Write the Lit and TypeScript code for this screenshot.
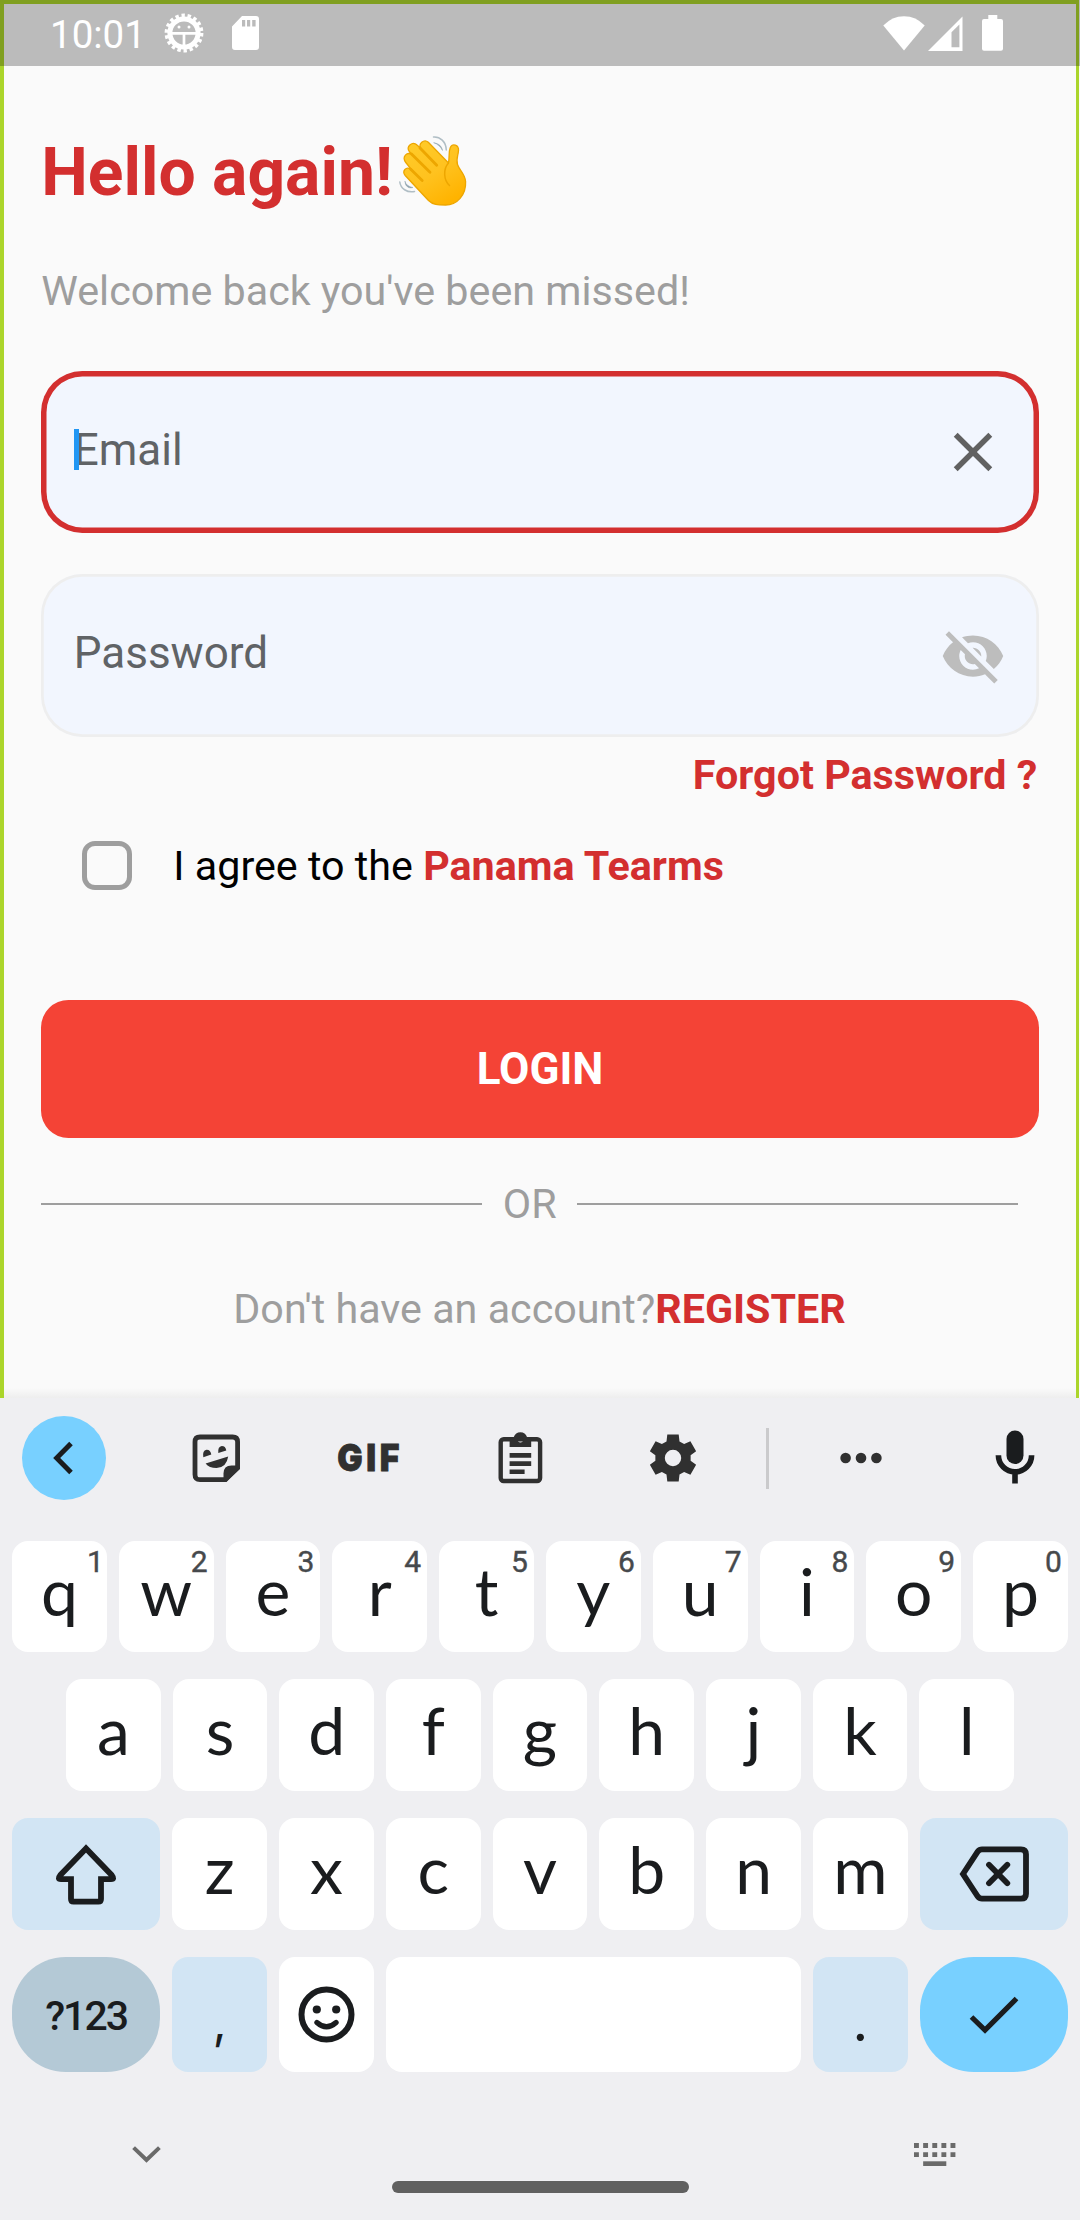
import { LitElement, html, css, nothing } from "lit";
import { customElement, property } from "lit/decorators.js";

const GEAR_POINTS = Array.from({ length: 6 }, (_, i) => {
  const a = (i * Math.PI) / 3;
  return [
    [-6.5, -16.6],
    [-5.7, -23.4],
    [5.7, -23.4],
    [6.5, -16.6],
  ]
    .map(([x, y]) => `${(x * Math.cos(a) - y * Math.sin(a)).toFixed(2)} ${(x * Math.sin(a) + y * Math.cos(a)).toFixed(2)}`)
    .join(" L");
}).join(" L");

const icons = {
  debug: html`<svg width="40" height="40" viewBox="-20 -20 40 40" fill="none" stroke="#fff">
    <circle r="14.1" stroke-width="5" />
    <circle r="17.6" stroke-width="3.6" stroke-dasharray="3.4 2.743" />
    <path d="M-12 .3H12M0 1V13" stroke-width="2.7" />
    <circle cx="-5" cy="-6" r="1.5" fill="#fff" stroke="none" />
    <circle cx="5" cy="-6" r="1.5" fill="#fff" stroke="none" />
  </svg>`,
  sd: html`<svg width="27" height="34" viewBox="0 0 27 34">
    <path fill="#fff" fill-rule="evenodd" d="M10 0H24Q27 0 27 3V31Q27 34 24 34H3Q0 34 0 31V10.500ZM10 4V10.600H13.200V4ZM15 4V10.600H18.200V4ZM20.200 4V10.600H23.600V4Z" />
  </svg>`,
  wifi: html`<svg width="42" height="35" viewBox="0 0 42 35"><path fill="#fff" d="M21 34.500L.3 9.500Q9 .2 21 .2T41.700 9.500Z" /></svg>`,
  signal: html`<svg width="35" height="35" viewBox="0 0 35 35"><path fill="#fff" fill-rule="evenodd" d="M34.500 .5V35H0ZM31.400 8.500L23.500 16.300V31.300H31.400Z" /></svg>`,
  battery: html`<svg width="21" height="36" viewBox="0 0 21 36"><path fill="#fff" d="M6.300 0H15.300V4H19Q21 4 21 6V33.700Q21 35.700 19 35.700H2Q0 35.700 0 33.700V6Q0 4 2 4H6.300Z" /></svg>`,
  wave: html`<svg width="68" height="70" viewBox="0 0 68 70" fill="none" stroke-linecap="round" stroke-linejoin="round" aria-label="waving hand">
    <defs>
      <linearGradient id="skin" x1="15" y1="10" x2="50" y2="66" gradientUnits="userSpaceOnUse">
        <stop offset="0" stop-color="#ffca28" /><stop offset=".5" stop-color="#ffc21f" /><stop offset="1" stop-color="#ffb300" />
      </linearGradient>
    </defs>
    <path fill="url(#skin)" stroke="#eda600" stroke-width="1.300"
      d="M29.500 64.500L6.200 39.500C2.500 35 7.500 30 11.300 33.300L14 35.500L6.800 26.500C2.500 20.500 8 15.500 13 18.500L10.500 15.800C6.500 10.500 13.500 4.500 18.300 9.300L22.300 13C18.500 8 25 2.500 29.300 6.200L49.500 27C50.600 21 49.400 16 51.300 11.500C53.300 7 60 8.500 59.500 14.500C59.200 19.500 56.800 23.500 58.500 28.500C60.500 34.500 66 37.500 66.600 45.500C67.300 59 58 69 46.500 69C39 69 34 69 29.500 64.500Z" />
    <path stroke="#eda600" stroke-width="2.800" d="M21 12L37.700 29.300M12.500 18L31 36.300M11.500 33L23.200 44.500" />
    <path stroke="#eda600" stroke-width="1.500" d="M49.500 27C44 33 44.500 44 50.500 49.500" />
    <path stroke="#b0bec5" stroke-width="1.500" d="M34.500 1C41 .5 47 5.500 47.300 14M.8 46C1.500 52.500 8 57 15.500 55.500" />
    <path fill="#90a4ae" d="M35 6.800C40 7.500 43 10.500 43.500 14.500C41.500 10.500 39 8.500 35 6.800ZM6 45.500C7 49 10 50.800 14 51.500C9.500 53 6 50 6 45.500Z" stroke="#90a4ae" stroke-width=".5" />
  </svg>`,
  clear: html`<svg width="66" height="66" viewBox="0 0 24 24"><path fill="#616161" d="M19 6.410L17.590 5 12 10.590 6.410 5 5 6.410 10.590 12 5 17.590 6.410 19 12 13.410 17.590 19 19 17.590 13.410 12z" /></svg>`,
  eyeOff: html`<svg class="eye" width="66" height="66" viewBox="0 0 24 24"><path fill="#bdbdbd" d="M12 7c2.760 0 5 2.240 5 5 0 .65-.13 1.260-.36 1.830l2.920 2.920c1.510-1.260 2.700-2.890 3.430-4.750-1.730-4.390-6-7.500-11-7.500-1.400 0-2.740.25-3.980.7l2.160 2.160C10.740 7.130 11.350 7 12 7zM2 4.270l2.280 2.280.46.46C3.080 8.300 1.780 10.020 1 12c1.730 4.390 6 7.500 11 7.500 1.550 0 3.030-.3 4.380-.84l.42.42L19.730 22 21 20.730 3.270 3 2 4.270zM7.530 9.800l1.550 1.550c-.05.21-.08.43-.08.65 0 1.660 1.340 3 3 3 .22 0 .44-.03.65-.08l1.550 1.550c-.67.33-1.410.53-2.200.53-2.760 0-5-2.240-5-5 0-.79.2-1.530.53-2.200zm4.310-.78l3.150 3.150.02-.16c0-1.660-1.340-3-3-3l-.17.010z" /></svg>`,
  back: html`<svg width="20" height="34" viewBox="0 0 20 34" fill="none" stroke="#1a1c1e" stroke-width="5"><path d="M18 2.500L3.700 17L18 31.500" /></svg>`,
  sticker: html`<svg width="48" height="48" viewBox="0 0 48 48" fill="#303030">
    <path fill="none" stroke="#303030" stroke-width="4.800" d="M33 45.600H8Q3 45.600 3 40.600V8Q3 3 8 3H40.600Q45.600 3 45.600 8V34Z" />
    <path d="M31.500 46V39.500Q31.500 31.500 39.500 31.500H47.500V35L34.500 48H31.500Z" />
    <path d="M11.300 23.200Q10.200 16.500 14.500 15.800Q18.500 15.600 19.300 20.500ZM26.300 18.900Q25.600 12.800 29.800 12Q33.500 12 34.300 16.400ZM13.600 29.500L36.200 22.600Q34.500 33.800 24.600 34Q17 34 13.600 29.500Z" />
  </svg>`,
  clipboard: html`<svg width="45" height="52" viewBox="0 0 45 52" fill="#303030">
    <rect x="2.700" y="7.200" width="39.400" height="41.800" rx="3" fill="none" stroke="#303030" stroke-width="4.400" />
    <path fill-rule="evenodd" d="M11.600 5H15.800A7 7 0 0 1 29 5H33.200V15H11.600ZM22.400 5A2.700 2.700 0 1 0 22.400 10.400A2.700 2.700 0 1 0 22.400 5Z" />
    <path d="M11.600 21H33.200V25.700H11.600ZM11.600 29.200H33.200V33.900H11.600ZM11.600 37.400H26.600V42.100H11.600Z" />
  </svg>`,
  settings: html`<svg width="48" height="48" viewBox="-24 -24 48 48">
    <path fill="#303030" fill-rule="evenodd" d="M${GEAR_POINTS}ZM-8.200 0A8.200 8.200 0 1 0 8.200 0A8.200 8.200 0 1 0 -8.200 0Z" />
  </svg>`,
  more: html`<svg width="42" height="12" viewBox="0 0 42 12" fill="#303030"><circle cx="5.600" cy="6" r="5.300" /><circle cx="21" cy="6" r="5.300" /><circle cx="36.400" cy="6" r="5.300" /></svg>`,
  mic: html`<svg width="40" height="54" viewBox="0 0 40 54">
    <rect x="11.500" y=".5" width="17" height="33.500" rx="8.500" fill="#1a1c1e" />
    <path d="M3.400 25.300A16.600 16.600 0 0 0 36.600 25.300M20 42V53.500" fill="none" stroke="#1a1c1e" stroke-width="5.600" />
  </svg>`,
  shift: html`<svg width="62" height="62" viewBox="0 0 62 62" fill="none" stroke="#1a1c1e" stroke-width="5.800">
    <path d="M31 5.500L5.200 32.300Q2 36.200 6 36.200H16V56Q16 58.600 18.600 58.600H43.400Q46 58.600 46 56V36.200H56Q60 36.200 56.800 32.300Z" />
  </svg>`,
  backspace: html`<svg width="72" height="56" viewBox="0 0 72 56" fill="none" stroke="#1a1c1e" stroke-width="5.800">
    <path d="M5 28L19.800 5.500Q21.500 3.300 24 3.300H63Q68 3.300 68 8.300V47.700Q68 52.700 63 52.700H24Q21.500 52.700 19.800 50.500Z" />
    <path stroke-linecap="round" d="M31 18.800L49.300 37.200M49.300 18.800L31 37.200" />
  </svg>`,
  smile: html`<svg width="57" height="57" viewBox="-28.500 -28.500 57 57" fill="none" stroke="#1a1c1e">
    <circle r="25" stroke-width="6" />
    <path d="M-9.600 8Q0 16.600 9.600 8" stroke-width="5.200" stroke-linecap="round" />
    <circle cx="-9.700" cy="-5" r="4.100" fill="#1a1c1e" stroke="none" /><circle cx="9.700" cy="-5" r="4.100" fill="#1a1c1e" stroke="none" />
  </svg>`,
  done: html`<svg width="50" height="38" viewBox="0 0 50 38" fill="none" stroke="#1a1c1e" stroke-width="5.200"><path d="M2.500 21L16 34L47.500 2.500" /></svg>`,
  down: html`<svg width="29" height="17" viewBox="0 0 29 17" fill="none" stroke="#6a6a6a" stroke-width="4"><path d="M1.600 1.600L14.500 14L27.400 1.600" /></svg>`,
  keyboard: html`<svg width="42" height="23" viewBox="0 0 42 23" fill="#6a6a6a">
    <path d="M0 0H4.900V4.900H0ZM9.150 0H14.050V4.900H9.150ZM18.300 0H23.200V4.900H18.300ZM27.400 0H32.300V4.900H27.400ZM36.500 0H41.400V4.900H36.500Z" />
    <path d="M0 9.200H4.900V14.100H0ZM9.150 9.200H14.050V14.100H9.150ZM18.300 9.200H23.200V14.100H18.300ZM27.400 9.200H32.300V14.100H27.400ZM36.500 9.200H41.400V14.100H36.500Z" />
    <path d="M9.150 18.300H32.300V23H9.150Z" />
  </svg>`,
};

@customElement("kb-key")
export class KbKey extends LitElement {
  @property() label = "";
  @property() hint = "";

  static styles = css`
    :host {
      display: flex;
      justify-content: center;
      position: relative;
      background: #fff;
      border-radius: 16px;
      color: #1a1c1e;
      font-family: Lato, sans-serif;
    }
    :host([tone="soft"]) { background: #d2e5f4; }
    :host([tone="mode"]) { background: #b4c9d6; border-radius: 54px; }
    :host([tone="action"]) { background: #78d0ff; border-radius: 54px; }
    .label { font-size: 66px; line-height: 101px; }
    :host([hint]) .label { line-height: 100px; }
    :host([tone="mode"]) .label { font-family: Roboto, sans-serif; font-size: 41px; line-height: 119px; font-weight: 500; letter-spacing: -2px; }
    :host([label=","]) .label { font-family: Inter, sans-serif; font-size: 48px; line-height: 130px; }
    :host([label="."]) .label { font-size: 58px; line-height: 124px; }
    .hint {
      position: absolute;
      top: 6px;
      right: 6px;
      font-family: Roboto, sans-serif;
      font-size: 30px;
      line-height: 30px;
      font-weight: 400;
      -webkit-text-stroke: 0.4px #46494c;
      color: #46494c;
    }
    :host([hint="1"]) .hint { right: 3px; }
    slot { display: contents; }
    ::slotted(svg) { align-self: center; }
  `;

  render() {
    return html`${this.label ? html`<span class="label">${this.label}</span>` : nothing}<slot></slot>${this.hint
      ? html`<span class="hint">${this.hint}</span>`
      : nothing}`;
  }
}

@customElement("soft-keyboard")
export class SoftKeyboard extends LitElement {
  static styles = css`
    :host { display: block; height: 822px; background: #efeff2; }
    svg { display: block; }
    .tools { display: flex; align-items: center; height: 84px; padding-top: 18px; }
    .collapse {
      display: flex; align-items: center; justify-content: center;
      width: 84px; height: 84px; margin: 0 34px 0 22px; border-radius: 42px; background: #78d0ff;
    }
    .collapse svg { margin-right: 2px; }
    .tool { display: flex; justify-content: center; width: 152.2px; }
    .gif span {
      font: 900 37px/44px Inter, sans-serif;
      color: #303030;
      letter-spacing: 4px;
      margin-right: -3px;
      transform: scaleX(0.91);
      -webkit-text-stroke: 0.8px #303030;
    }
    .rule { width: 3px; height: 61px; margin: 0 16px 0 17px; background: #cacacc; }
    .voice { margin-left: 58.5px; margin-top: -2px; }
    .rows { display: grid; gap: 27px; padding: 41px 12px 0; grid-template-rows: 111px 112px 112px 115px; }
    .row { display: flex; gap: 12px; }
    .row > kb-key { flex: 1 1 0; }
    .row.inset { padding: 0 54px; }
    .row > .wide { flex: 0 0 148.200px; }
    .row > .unit { flex: 0 0 94.800px; }
    .nav { display: flex; justify-content: space-between; align-items: center; height: 23px; margin: 71px 124px 0 132px; }
    .home { width: 297px; height: 11.500px; margin: 15.200px auto 0; border-radius: 6px; background: #606060; }
  `;

  private letters(chars: string) {
    return [...chars].map((c) => html`<kb-key label=${c}></kb-key>`);
  }

  render() {
    return html`
      <div class="tools">
        <div class="collapse">${icons.back}</div>
        <div class="tool">${icons.sticker}</div>
        <div class="tool gif"><span>GIF</span></div>
        <div class="tool">${icons.clipboard}</div>
        <div class="tool">${icons.settings}</div>
        <div class="rule"></div>
        <div class="tool">${icons.more}</div>
        <div class="voice">${icons.mic}</div>
      </div>
      <div class="rows">
        <div class="row">
          ${[..."qwertyuiop"].map((c, i) => html`<kb-key label=${c} hint=${String((i + 1) % 10)}></kb-key>`)}
        </div>
        <div class="row inset">${this.letters("asdfghjkl")}</div>
        <div class="row">
          <kb-key class="wide" tone="soft">${icons.shift}</kb-key>
          ${this.letters("zxcvbnm")}
          <kb-key class="wide" tone="soft">${icons.backspace}</kb-key>
        </div>
        <div class="row">
          <kb-key class="wide" tone="mode" label="?123"></kb-key>
          <kb-key class="unit" tone="soft" label=","></kb-key>
          <kb-key class="unit">${icons.smile}</kb-key>
          <kb-key></kb-key>
          <kb-key class="unit" tone="soft" label="."></kb-key>
          <kb-key class="wide" tone="action">${icons.done}</kb-key>
        </div>
      </div>
      <div class="nav">${icons.down}${icons.keyboard}</div>
      <div class="home"></div>
    `;
  }
}

@customElement("app-root")
export class AppRoot extends LitElement {
  static styles = css`
    :host { display: block; width: 1080px; height: 2220px; overflow: hidden; font-family: Roboto, sans-serif; }
    * { box-sizing: border-box; }
    svg { display: block; flex: none; }
    .screen {
      position: relative;
      height: 1398px;
      padding-right: 1px;
      background: #fafafa;
    }
    .frame {
      height: 1398px;
      border: 4px solid #abd52b;
      border-width: 4px 3px 0 4px;
      padding: 129px 37.250px 0;
      background: linear-gradient(#fafafa, #eeeeee) bottom / 100% 10px no-repeat #fafafa;
    }
    .status {
      position: absolute; inset: 0 0 auto; height: 66px; padding: 0 77px 0 50px;
      display: flex; align-items: center; background: rgba(0, 0, 0, 0.25);
      color: #fff; font-size: 38.500px; line-height: 71px;
    }
    .status .left, .status .right { display: flex; align-items: center; }
    .status .clock { width: 114px; height: 68px; }
    .status .sd { margin-left: 27.500px; }
    .status .right { margin-left: auto; }
    .status .cell { margin-left: 3px; }
    .status .power { margin-left: 19px; }
    .title { display: flex; margin: 0; height: 79px; font-size: 66px; line-height: 79px; font-weight: 700; color: #d32f2f; }
    .title svg { margin: 3px 0 0 6px; }
    .sub { margin: 54.500px 0 0; font-size: 41.250px; line-height: 48px; color: #9e9e9e; }
    .field {
      display: flex; align-items: center; justify-content: space-between;
      width: 997.500px; height: 162.300px; padding: 0 33px 0 32.500px; border-radius: 41.250px;
      background: #f2f6fe; box-shadow: inset 0 0 0 2.750px #eeeeee;
      font-size: 44px; line-height: 52px; color: #606366;
    }
    .field .text { margin-top: -5px; display: flex; align-items: center; }
    .field.email { margin-top: 56.500px; box-shadow: inset 0 0 0 5.500px #d32f2f; }
    .field.password { margin-top: 41px; }
    .eye { margin-top: 2px; }
    .caret { width: 5.500px; height: 41.500px; margin-right: -5.500px; background: #2196f3; z-index: 1; }
    .forgot { margin-top: 14px; text-align: right; padding-right: 1.500px; font-size: 41.250px; line-height: 48px; font-weight: 700; color: #d32f2f; }
    .terms { display: flex; align-items: center; height: 50px; margin: 42px 0 0 40.800px; font-size: 41.250px; line-height: 50px; color: #000; }
    .box { width: 49.500px; height: 49.500px; margin-right: 41.800px; border: 5.500px solid #9e9e9e; border-radius: 13px; }
    b { font-weight: 700; color: #d32f2f; }
    .login {
      width: 997.500px; height: 138px; margin-top: 109.500px; border-radius: 27.500px; background: #f44336;
      color: #fff; font-size: 44px; line-height: 139px; font-weight: 700; text-align: center;
    }
    .or { display: flex; align-items: center; gap: 20.600px; height: 48px; margin-top: 42px; padding-right: 20.600px; width: 997.500px; font-size: 41.250px; line-height: 48px; color: #9e9e9e; }
    .or i { flex: 1; height: 2.750px; background: #9e9e9e; }
    .register { width: 996.500px; margin-top: 56.500px; text-align: center; font-size: 41.250px; line-height: 48px; color: #9e9e9e; }
  `;

  render() {
    return html`
      <div class="screen">
        <div class="frame">
          <h1 class="title"><span>Hello again!</span>${icons.wave}</h1>
          <p class="sub">Welcome back you've been missed!</p>
          <div class="field email">
            <div class="text"><span class="caret"></span><span>Email</span></div>
            ${icons.clear}
          </div>
          <div class="field password">
            <div class="text">Password</div>
            ${icons.eyeOff}
          </div>
          <div class="forgot">Forgot Password ?</div>
          <div class="terms"><span class="box"></span><span>I agree to the <b>Panama Tearms</b></span></div>
          <div class="login">LOGIN</div>
          <div class="or"><i></i><span>OR</span><i></i></div>
          <div class="register">Don't have an account?<b>REGISTER</b></div>
        </div>
        <div class="status">
          <div class="left"><span class="clock">10:01</span>${icons.debug}<span class="sd">${icons.sd}</span></div>
          <div class="right">${icons.wifi}<span class="cell">${icons.signal}</span><span class="power">${icons.battery}</span></div>
        </div>
      </div>
      <soft-keyboard></soft-keyboard>
    `;
  }
}
